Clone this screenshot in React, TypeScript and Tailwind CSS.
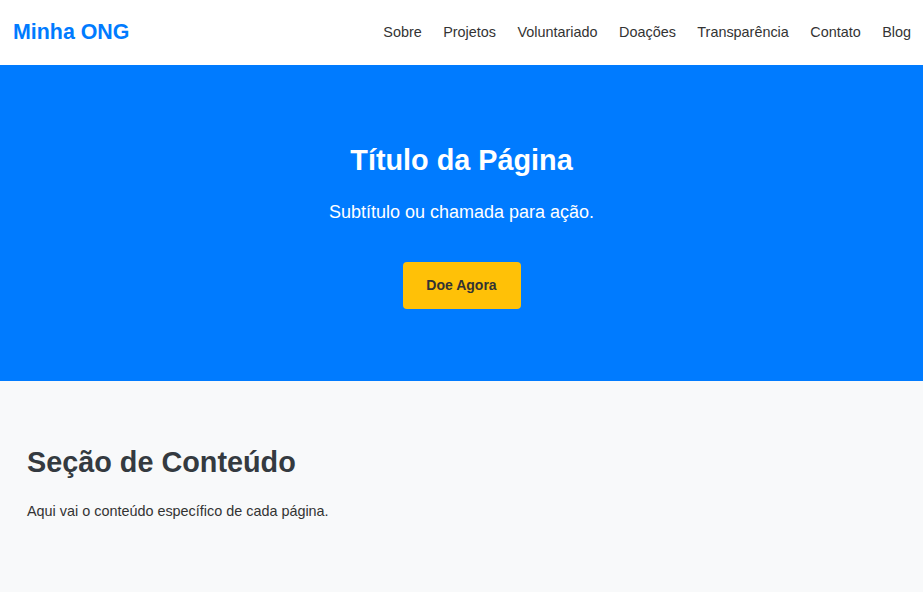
const links = ["Sobre", "Projetos", "Voluntariado", "Doações", "Transparência", "Contato", "Blog"];

export default function App() {
  return (
    <div className="min-h-screen bg-[#f8f9fa] font-['Liberation_Sans',Arial,sans-serif] text-[#333]">
      {/* Header */}
      <header className="flex h-[65px] items-center justify-between bg-white pl-[13px] pr-[12px]">
        <div className="text-[21.4px] font-bold text-[#007bff]">Minha ONG</div>
        <nav className="flex gap-[21.5px] text-[14.4px] text-[#333]">
          {links.map((l) => (
            <a key={l} href="#" className="hover:text-[#007bff]">
              {l}
            </a>
          ))}
        </nav>
      </header>

      {/* Hero */}
      <section className="flex h-[316px] flex-col items-center bg-[#007bff] pt-[78px] text-white">
        <h1 className="text-[28.8px] font-bold leading-[35px]">Título da Página</h1>
        <p className="mt-[23px] text-[18px] leading-[22px]">Subtítulo ou chamada para ação.</p>
        <button className="mt-[39px] h-[47px] w-[118px] rounded-[4px] bg-[#ffc107] text-[14px] font-bold text-[#333]">
          Doe Agora
        </button>
      </section>

      {/* Content */}
      <section className="px-[27px] pt-[64px] pb-[60px]">
        <h2 className="text-[28.8px] font-bold leading-[35px] text-[#343a40]">Seção de Conteúdo</h2>
        <p className="mt-[21px] text-[14.4px] text-[#333]">Aqui vai o conteúdo específico de cada página.</p>
      </section>
    </div>
  );
}
